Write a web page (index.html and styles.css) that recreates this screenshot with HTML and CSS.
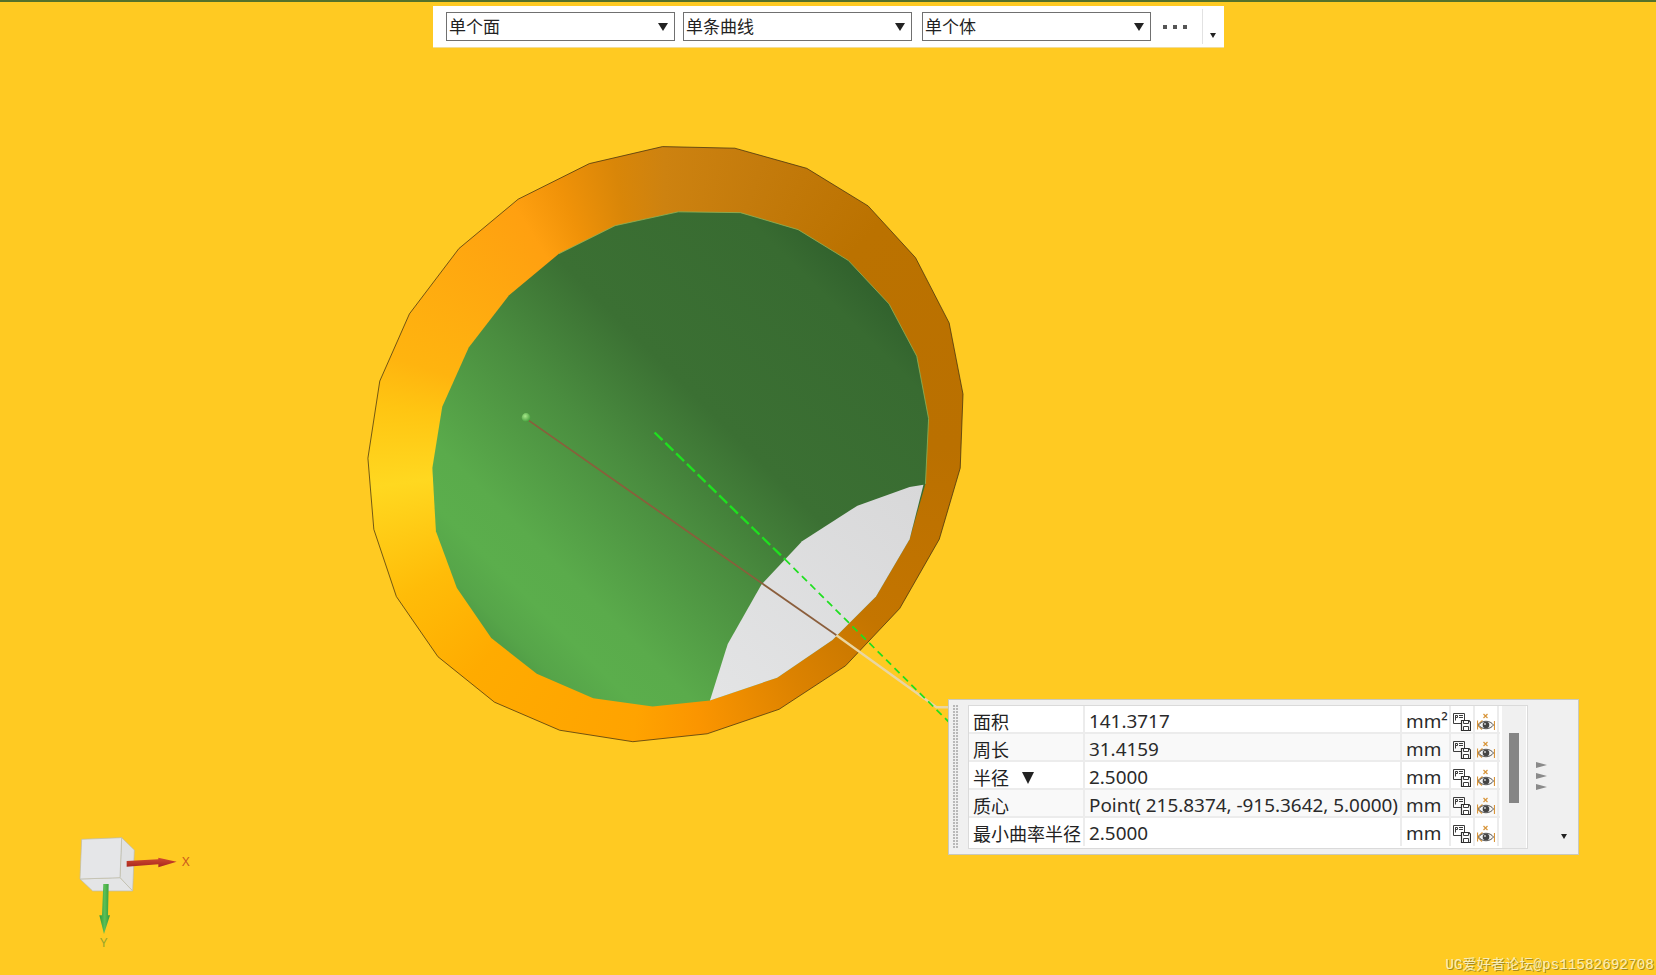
FILE: index.html
```html
<!DOCTYPE html>
<html lang="zh">
<head>
<meta charset="utf-8">
<title>测量</title>
<link rel="stylesheet" href="styles.css">
</head>
<body>
<main class="viewport">
  <div class="ring"></div>
  <svg class="scene" width="1656" height="975" viewBox="0 0 1656 975" xmlns="http://www.w3.org/2000/svg">
    <defs>
      <clipPath id="ringClip">
        <polygon transform="translate(360 130) scale(.39541)" points="765,42 948,46 1130,97 1285,192 1405,323 1490,488 1525,668 1518,855 1465,1035 1365,1210 1228,1355 1060,1465 878,1527 690,1547 505,1518 340,1447 197,1332 92,1180 35,1010 20,830 50,635 125,465 250,300 400,175 580,85"/>
      </clipPath>
      <linearGradient id="greenFace" gradientUnits="userSpaceOnUse" x1="330" y1="1320" x2="1300" y2="350">
        <stop offset="0" stop-color="#4e9844"/>
        <stop offset=".05" stop-color="#56a549"/>
        <stop offset=".12" stop-color="#5bae4c"/>
        <stop offset=".2" stop-color="#5aab4b"/>
        <stop offset=".42" stop-color="#4a8d3f"/>
        <stop offset=".6" stop-color="#3b7033"/>
        <stop offset=".9" stop-color="#386b31"/>
        <stop offset="1" stop-color="#2f5f2c"/>
      </linearGradient>
      <linearGradient id="greyFace" gradientUnits="userSpaceOnUse" x1="900" y1="1440" x2="1420" y2="900">
        <stop offset="0" stop-color="#e3e4e5"/>
        <stop offset="1" stop-color="#d8d8d9"/>
      </linearGradient>
      <linearGradient id="redArrow" x1="0" y1="0" x2="0" y2="1">
        <stop offset="0" stop-color="#d04a30"/>
        <stop offset="1" stop-color="#a8261e"/>
      </linearGradient>
      <linearGradient id="greenArrow" x1="0" y1="0" x2="1" y2="0">
        <stop offset="0" stop-color="#2f9a3a"/>
        <stop offset=".5" stop-color="#5cbf55"/>
        <stop offset="1" stop-color="#2f9a3a"/>
      </linearGradient>
      <radialGradient id="dot" cx=".4" cy=".35" r=".7">
        <stop offset="0" stop-color="#a8e88a"/>
        <stop offset="1" stop-color="#3f9a38"/>
      </radialGradient>
    </defs>

    <g transform="translate(360 130) scale(.39541)">
      <polygon class="outline" points="765,42 948,46 1130,97 1285,192 1405,323 1490,488 1525,668 1518,855 1465,1035 1365,1210 1228,1355 1060,1465 878,1527 690,1547 505,1518 340,1447 197,1332 92,1180 35,1010 20,830 50,635 125,465 250,300 400,175 580,85"/>
      <polygon class="green" points="805,207 962,209 1108,252 1235,330 1338,440 1408,572 1438,730 1430,895 1390,1035 1305,1180 1195,1290 1055,1385 885,1443 740,1458 590,1437 447,1375 332,1285 245,1158 192,1015 183,855 208,700 275,550 377,418 503,313 645,242"/>
      <polyline class="rim" points="503,313 645,242 805,207 962,209 1108,252 1235,330 1338,440 1408,572 1438,730 1430,895"/>
      <polygon class="grey" points="885,1443 930,1300 1015,1150 1118,1040 1258,950 1390,903 1425,897 1390,1035 1305,1180 1195,1290 1055,1385"/>
      <line class="leader-brown" x1="420" y1="730" x2="1205" y2="1278"/>
      <polyline class="leader-pale" points="1205,1278 1458,1460 1495,1460"/>
      <line class="dash-long" x1="745" y1="765" x2="1075" y2="1086"/>
      <line class="dash-short" x1="1075" y1="1086" x2="1490" y2="1498"/>
      <circle class="point" cx="420" cy="727" r="11"/>
    </g>

    <g transform="translate(50 810) scale(.33333)">
      <polygon class="cube-side" points="215,83 253,120 248,243 210,203"/>
      <polygon class="cube-bottom" points="90,207 210,203 248,243 128,243"/>
      <polygon class="cube-front" points="95,88 215,83 210,203 90,207"/>
      <polygon fill="url(#redArrow)" points="230,153 325,148 325,143 380,155 325,172 325,163 230,170"/>
      <polygon fill="url(#greenArrow)" points="160,222 176,222 174,316 180,316 162,372 148,316 156,316"/>
    </g>
    <text class="axis-x" x="182" y="866">X</text>
    <text class="axis-y" x="100" y="947">Y</text>

    <symbol id="iconSave" viewBox="0 0 18 18">
      <path class="ico-line" d="M.5.5h11v7h-3v3H.5z"/>
      <path class="ico-line" d="M2.500 2.500h2v2h-2zM2.500 2.500v5M6 2.500h4M6 4.500h4"/>
      <path class="ico-dark" d="M8.500 7.500h7.500l1.500 1.500v8.500h-9z"/>
      <path class="ico-line" d="M10.500 7.500v3h5v-3M10.500 17.500v-4h5v4"/>
    </symbol>
    <symbol id="iconEye" viewBox="0 0 18 18">
      <path class="ico-x" d="M6.500 1l4 4M10.500 1l-4 4"/>
      <path class="ico-x" d="M.5 7.500v9M.5 12l5-4.500M.5 12l4.500 4.500M17.500 8v9"/>
      <path class="ico-sclera" d="M1.500 12c3.500-5 11.500-5 15 0-3.500 5-11.500 5-15 0z"/>
      <circle class="ico-pupil" cx="9" cy="12" r="3.300"/>
      <circle class="ico-glint" cx="8" cy="11" r=".9"/>
    </symbol>
  </svg>

  <div class="selbar">
    <div class="combo"><span>单个面</span><i class="caret"></i></div>
    <div class="combo"><span>单条曲线</span><i class="caret"></i></div>
    <div class="combo"><span>单个体</span><i class="caret"></i></div>
    <div class="more"><b></b><b></b><b></b></div>
    <div class="overflow"><i class="mini-caret"></i></div>
  </div>

  <aside class="measure">
    <div class="grip"></div>
    <div class="sheet">
      <div class="rows">
        <div class="row">
          <div class="c name">面积</div><div class="c val">141.3717</div><div class="c unit">mm²</div>
          <div class="c ic"><svg class="ico"><use href="#iconSave"/></svg></div><div class="c ic"><svg class="ico"><use href="#iconEye"/></svg></div>
        </div>
        <div class="row">
          <div class="c name">周长</div><div class="c val">31.4159</div><div class="c unit">mm</div>
          <div class="c ic"><svg class="ico"><use href="#iconSave"/></svg></div><div class="c ic"><svg class="ico"><use href="#iconEye"/></svg></div>
        </div>
        <div class="row">
          <div class="c name">半径<i class="sort"></i></div><div class="c val">2.5000</div><div class="c unit">mm</div>
          <div class="c ic"><svg class="ico"><use href="#iconSave"/></svg></div><div class="c ic"><svg class="ico"><use href="#iconEye"/></svg></div>
        </div>
        <div class="row">
          <div class="c name">质心</div><div class="c val">Point( 215.8374, -915.3642, 5.0000)</div><div class="c unit">mm</div>
          <div class="c ic"><svg class="ico"><use href="#iconSave"/></svg></div><div class="c ic"><svg class="ico"><use href="#iconEye"/></svg></div>
        </div>
        <div class="row">
          <div class="c name">最小曲率半径</div><div class="c val">2.5000</div><div class="c unit">mm</div>
          <div class="c ic"><svg class="ico"><use href="#iconSave"/></svg></div><div class="c ic"><svg class="ico"><use href="#iconEye"/></svg></div>
        </div>
      </div>
      <div class="scroll"><div class="thumb"></div></div>
    </div>
    <div class="side">
      <div class="expand"><i></i><i></i><i></i></div>
      <i class="mini-caret side-caret"></i>
    </div>
  </aside>

  <div class="watermark">UG爱好者论坛@ps11582692708</div>
</main>
</body>
</html>
```
FILE: styles.css
```css
* { box-sizing: border-box; }
html, body { margin: 0; padding: 0; }
body { background: #ffca22; }

.viewport {
  position: relative;
  width: 1656px;
  height: 975px;
  overflow: hidden;
  background: #ffca22;
  border-top: 2px solid #55702a;
  font-family: "Noto Sans", "Noto Sans CJK SC", sans-serif;
  color: #222;
}

/* 3D view canvas */
.ring {
  position: absolute;
  left: 0;
  top: -2px;
  width: 1656px;
  height: 975px;
  clip-path: url(#ringClip);
  background: conic-gradient(from 0deg at 664.5px 446px,
    #cd8210 0deg, #c47b0c 19deg, #bb7200 44deg, #ba7000 90deg, #c47500 130deg,
    #dc8200 151deg, #fb9500 173deg, #ffa300 186deg, #ffab00 220deg,
    #ffbc08 240deg, #ffd820 262deg, #ffc512 278deg, #ffb40f 288deg,
    #ffa010 328deg, #f09208 338deg, #d98608 350deg, #cd8210 360deg);
}
.scene { position: absolute; left: 0; top: -2px; }
.outline { fill: none; stroke: #3a2a10; stroke-width: 1.8; }
.green { fill: url(#greenFace); }
.rim { fill: none; stroke: #8cb45a; stroke-width: 2; }
.grey { fill: url(#greyFace); }
.leader-brown { stroke: #8b5e3c; stroke-width: 4.4; }
.leader-pale { fill: none; stroke: #e9d6a2; stroke-width: 6; }
.dash-long { stroke: #1fe01f; stroke-width: 6; stroke-dasharray: 28 10; }
.dash-short { stroke: #1fe01f; stroke-width: 4.4; stroke-dasharray: 18 12; }
.point { fill: url(#dot); }
.cube-front { fill: #e5e6e8; stroke: #b9b9ae; stroke-width: 2; }
.cube-side { fill: #e0e1e2; stroke: #b9b9ae; stroke-width: 2; }
.cube-bottom { fill: #e4e5e6; stroke: #b9b9ae; stroke-width: 2; }
.axis-x { font: 13px "Noto Sans", sans-serif; fill: #cc5a1e; }
.axis-y { font: 13px "Noto Sans", sans-serif; fill: #9aa52a; }
.ico-line { fill: none; stroke: #3c3c3c; stroke-width: 1; }
.ico-dark { fill: #fff; stroke: #2c2c2c; stroke-width: 1.2; }
.ico-x { fill: none; stroke: #d8953a; stroke-width: 1.2; }
.ico-sclera { fill: #f4f4f4; stroke: #555; stroke-width: 1; }
.ico-pupil { fill: #444; }
.ico-glint { fill: #ddd; }

/* Selection bar */
.selbar {
  position: absolute;
  left: 433px;
  top: 4px;
  width: 791px;
  height: 42px;
  background: #fff;
  border-bottom: 1px solid #f0dc9a;
  display: flex;
  align-items: flex-start;
  padding: 6px 0 0 13px;
}
.combo {
  width: 229px;
  height: 29px;
  border: 1px solid #707070;
  margin-right: 8px;
  display: flex;
  align-items: center;
  justify-content: space-between;
  padding: 0 6px 0 2px;
  font-size: 17px;
  line-height: 1;
}
.combo:nth-child(3) { margin-left: 2px; margin-right: 0; }
.caret {
  width: 0;
  height: 0;
  border-left: 5.500px solid transparent;
  border-right: 5.500px solid transparent;
  border-top: 8px solid #222;
}
.more {
  width: 51px;
  height: 29px;
  display: flex;
  justify-content: flex-start;
  align-items: center;
  gap: 6px;
  padding-left: 12px;
}
.more b { width: 4px; height: 4px; background: #555; }
.overflow {
  width: 21px;
  height: 35px;
  margin-top: -3px;
  border-left: 1px solid #e2e2e2;
  display: flex;
  justify-content: center;
  padding-top: 24px;
}
.mini-caret {
  width: 0;
  height: 0;
  border-left: 3.500px solid transparent;
  border-right: 3.500px solid transparent;
  border-top: 5px solid #222;
}

/* Measurement panel */
.measure {
  position: absolute;
  left: 948px;
  top: 697px;
  width: 631px;
  height: 156px;
  background: #f0f0f0;
  border: 1px solid #c9c9bd;
  display: flex;
  padding: 5px 0 5px 1px;
}
.grip {
  width: 18px;
  height: 100%;
  flex: none;
  background-image: linear-gradient(90deg, #f0f0f0 1px, transparent 1px), linear-gradient(#b8b8b8 2px, transparent 2px);
  background-size: 3px 100%, 100% 3px;
  background-origin: content-box;
  background-clip: content-box;
  padding: 0 10px 0 2px;
}
.sheet {
  width: 560px;
  flex: none;
  background: #fff;
  border: 1px solid #dadada;
  display: flex;
  font-size: 18.900px;
  line-height: 28px;
}
.rows { width: 531px; flex: none; display: flex; flex-direction: column; }
.row {
  height: 28px;
  display: grid;
  grid-template-columns: 116px 317px 49px 24px 24px;
  border-bottom: 2px solid #ececec;
  background: #fff;
}
.row:nth-child(even) { background: #f9f9f9; }
.row:last-child { border-bottom: 0; }
.c { border-right: 2px solid #ececec; white-space: nowrap; overflow: hidden; height: 28px; padding-top: 1px; }
.name { padding-left: 4px; font-size: 18px; font-family: "Noto Sans CJK SC", sans-serif; }
.val { padding-left: 4px; color: #2a2a2a; }
.unit { padding-left: 4px; color: #2a2a2a; }
.ic { display: flex; align-items: center; justify-content: center; padding-top: 3px; }
.ico { width: 18px; height: 18px; display: block; }
.sort {
  display: inline-block;
  width: 0;
  height: 0;
  margin-left: 13px;
  vertical-align: 1px;
  border-left: 6px solid transparent;
  border-right: 6px solid transparent;
  border-top: 12px solid #222;
}
.scroll { flex: 1; margin: 0 1px 0 2px; background: #f0f0f0; padding: 27px 7px 0; }
.thumb { height: 70px; background: #858585; }
.side { flex: 1; position: relative; display: flex; justify-content: flex-start; padding-left: 8px; }
.expand { display: flex; flex-direction: column; gap: 5px; padding-top: 57px; }
.expand i {
  width: 0;
  height: 0;
  border-top: 3px solid transparent;
  border-bottom: 3px solid transparent;
  border-left: 11px solid #8a8a8a;
}
.side-caret { position: absolute; right: 11px; bottom: 10px; }

.watermark {
  position: absolute;
  right: 2px;
  bottom: 1px;
  font: 14px/18px "Liberation Mono", "Noto Sans CJK SC", monospace;
  letter-spacing: .2px;
  color: #f8eeb8;
  text-shadow: 1px 1px 0 #a88a20;
  white-space: nowrap;
}
```
